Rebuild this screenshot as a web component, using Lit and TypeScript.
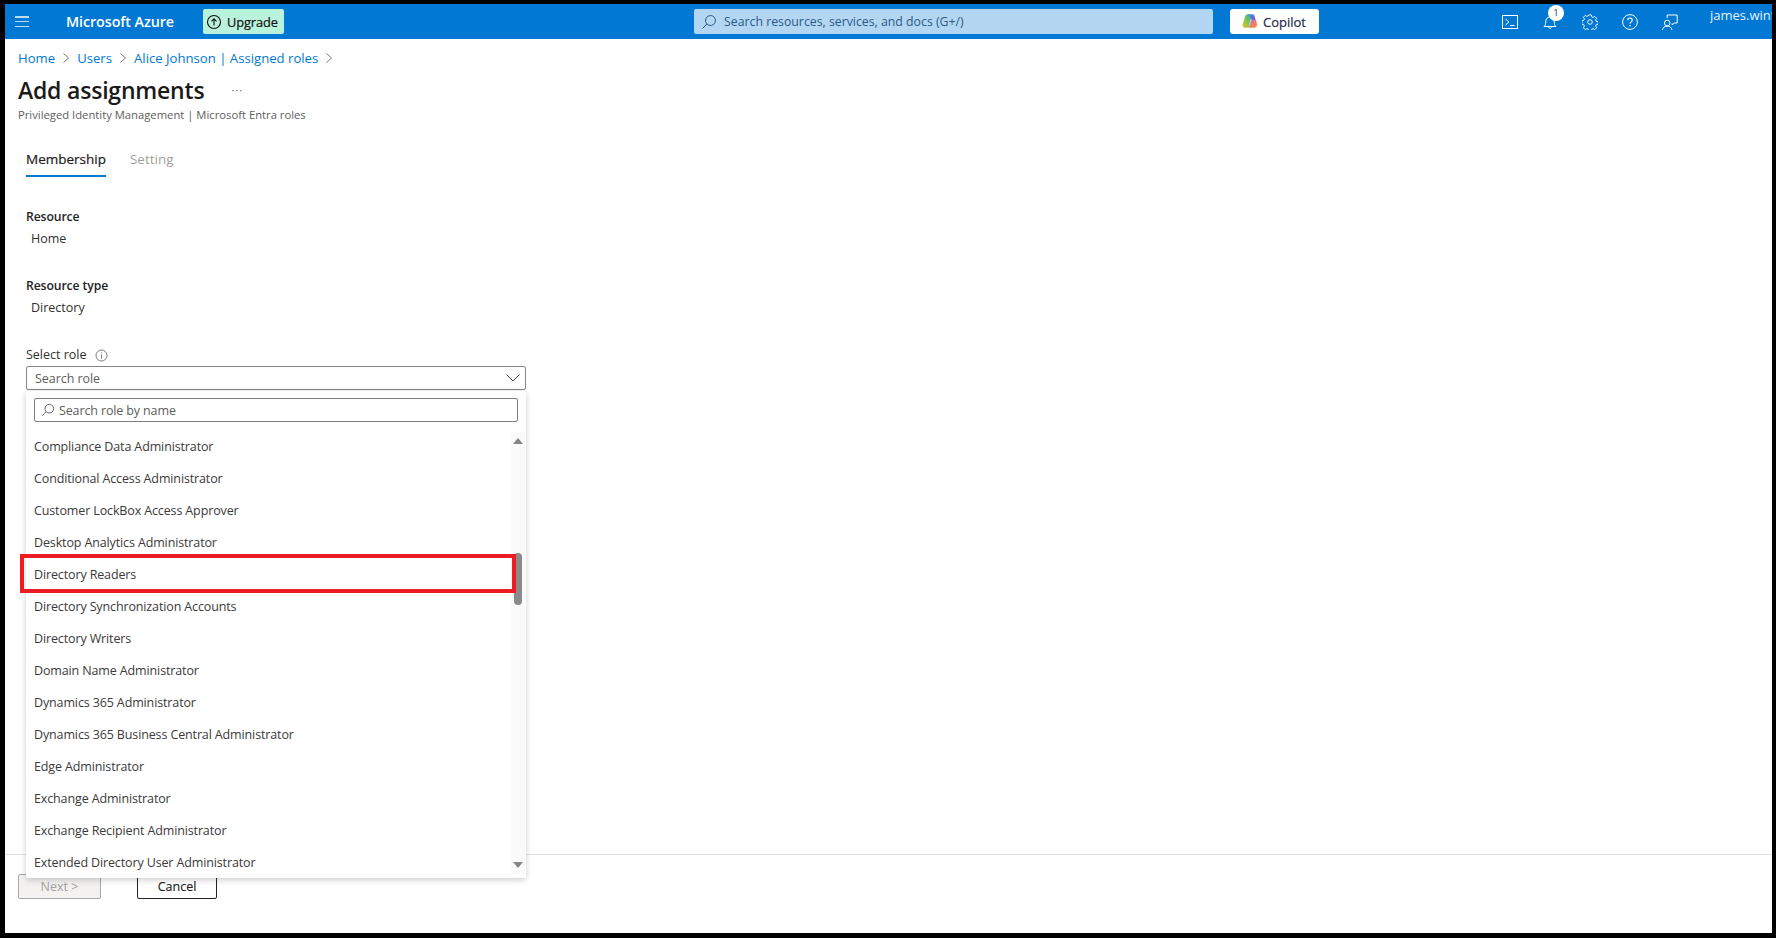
import { LitElement, html, css, svg } from "lit";
import { customElement } from "lit/decorators.js";

const ROLES = [
  "Compliance Data Administrator",
  "Conditional Access Administrator",
  "Customer LockBox Access Approver",
  "Desktop Analytics Administrator",
  "Directory Readers",
  "Directory Synchronization Accounts",
  "Directory Writers",
  "Domain Name Administrator",
  "Dynamics 365 Administrator",
  "Dynamics 365 Business Central Administrator",
  "Edge Administrator",
  "Exchange Administrator",
  "Exchange Recipient Administrator",
  "Extended Directory User Administrator",
];

const searchIcon = svg`<path d="M9.5 1.5a5 5 0 1 1-3.6 8.5A5 5 0 0 1 9.5 1.5Zm-3.6 8.5L1.5 14.5" fill="none" stroke="currentColor" stroke-width="1"/>`;

@customElement("app-root")
export class AppRoot extends LitElement {
  static styles = css`
    :host {
      display: block;
      width: 1776px;
      height: 938px;
      font-family: "Open Sans", "Noto Sans", sans-serif;
      color: #323130;
      font-size: 13px;
    }
    * { box-sizing: border-box; }
    .frame {
      width: 100%;
      height: 100%;
      border-style: solid;
      border-color: #000;
      border-width: 4px 4px 5px 5px;
      background: #fff;
      display: flex;
      flex-direction: column;
      position: relative;
      overflow: hidden;
    }
    header {
      height: 35px;
      flex: none;
      background: #0078d4;
      display: flex;
      align-items: center;
      color: #fff;
      position: relative;
    }
    .burger { margin-left: 10px; width: 14px; height: 11px; display: flex; flex-direction: column; justify-content: space-between; }
    .burger i { display: block; height: 1.5px; background: #bcdcf4; }
    .brand { margin-left: 37px; width: 112px; font-size: 14.3px; font-weight: 600; white-space: nowrap; letter-spacing: -0.08px; }
    .upgrade {
      margin-left: 25px; width: 81px; height: 25px; border-radius: 2px;
      background: #b9f3dc; color: #111; display: flex; align-items: center; gap: 5px; padding-left: 3px;
      font-size: 12.8px; letter-spacing: -0.08px; -webkit-text-stroke: .2px #111;
    }
    .search {
      margin-left: 410px; width: 519px; height: 25px; border-radius: 2px; background: #b3d7f2;
      color: #2c5a85; display: flex; align-items: center; gap: 7px; padding-left: 7px; font-size: 12.3px; white-space: nowrap;
    }
    .copilot {
      margin-left: 17px; width: 89px; height: 25px; border-radius: 3px; background: #fff; color: #1f2d4d;
      display: flex; align-items: center; gap: 5px; padding-left: 11px; font-size: 13px; -webkit-text-stroke: .2px #1f2d4d;
    }
    .hicons { margin-left: 183px; display: flex; align-items: center; gap: 24px; }
    .hicon { position: relative; width: 16px; height: 16px; display: block; }
    .hicon svg { display: block; }
    .badge {
      position: absolute; left: 6px; top: -9px; width: 16px; height: 16px; border-radius: 50%;
      background: #fff; color: #0f3f68; font-size: 9.5px; line-height: 16px; text-align: center;
    }
    .user {
      position: absolute; left: 1705px; top: 2px; font-size: 13px; white-space: nowrap;
      color: #e6f2fb; width: 63px; overflow: hidden;
    }

    main { flex: 1; min-height: 0; display: flex; flex-direction: column; padding: 0 0 0 13px; }
    .crumbs { margin-top: 10px; height: 18px; display: flex; align-items: center; gap: 7px; color: #0078d4; font-size: 13.15px; white-space: nowrap; }
    .crumbs svg { color: #7a7a7a; }
    .title-row { margin-top: 9px; display: flex; align-items: center; height: 28px; }
    h1 { margin: 0; font-size: 23px; font-weight: 600; color: #1b1a19; letter-spacing: -0.2px; white-space: nowrap; }
    .more { margin-left: 27px; color: #666; font-size: 11px; line-height: 1; position: relative; top: -1px; letter-spacing: 1px; }
    .sub { margin-top: 3px; font-size: 11.25px; color: #605e5c; white-space: nowrap; height: 16px; line-height: 16px; }
    .tabs { margin-top: 26px; margin-left: 8px; display: flex; gap: 24px; height: 28px; }
    .tab { font-size: 13.5px; height: 28px; line-height: 20px; }
    .tab.on { color: #1b1a19; -webkit-text-stroke: .2px #1b1a19; border-bottom: 2px solid #0078d4; }
    .tab.off { color: #a19f9d; }

    .form { margin-top: 31px; margin-left: 8px; }
    .label { font-size: 12.2px; font-weight: 600; color: #252423; height: 18px; line-height: 18px; letter-spacing: -0.1px; }
    .value { font-size: 12.5px; margin: 4px 0 0 5px; color: #323130; height: 18px; line-height: 18px; }
    .field + .field { margin-top: 29px; }
    .select-label { display: flex; align-items: center; gap: 8px; font-size: 12.5px; height: 18px; line-height: 18px; color: #323130; }
    .combo {
      margin-top: 2px; width: 500px; height: 24px; border: 1px solid #8a8886; border-radius: 2px;
      display: flex; align-items: center; justify-content: space-between; padding: 0 4px 0 8px; color: #605e5c; font-size: 12.5px; letter-spacing: -0.05px;
    }

    .spacer { flex: 1; }
    footer {
      flex: none; height: 79px; border-top: 1px solid #e1e1e1; margin-left: -13px;
      display: flex; align-items: flex-start; gap: 36px; padding: 19px 0 0 13px;
    }
    .btn { height: 25px; border-radius: 2px; display: flex; align-items: center; justify-content: center; font-size: 12.5px; }
    .next { width: 83px; background: #f3f2f1; border: 1px solid #a8a8a8; color: #a19f9d; letter-spacing: .05px; }
    .cancel { width: 80px; background: #fff; border: 1px solid #252423; color: #201f1e; -webkit-text-stroke: .15px #201f1e; }

    .drop {
      position: absolute; left: 21px; top: 387px; width: 500px; height: 487px; background: #fff;
      border-radius: 2px; box-shadow: 0 1.5px 6px rgba(0,0,0,.2); z-index: 3;
    }
    .drop-search {
      margin: 7px 8px 0; height: 24px; border: 1px solid #7f7f7f; border-radius: 2px;
      display: flex; align-items: center; gap: 4px; padding-left: 6px; color: #605e5c; font-size: 12.5px; letter-spacing: -0.13px;
    }
    .list { margin-top: 9px; padding-left: 8px; }
    .item { height: 32px; line-height: 32px; font-size: 12.5px; color: #3b3a39; white-space: nowrap; letter-spacing: -0.13px; }
    .track { position: absolute; right: 1px; top: 41px; bottom: 4px; width: 14px; background: #fafafa; }
    .arrow-up, .arrow-down { position: absolute; left: 2px; width: 0; height: 0; border-left: 5px solid transparent; border-right: 5px solid transparent; }
    .arrow-up { top: 6px; border-bottom: 6px solid #858585; }
    .arrow-down { bottom: 6px; border-top: 6px solid #858585; }
    .thumb { position: absolute; left: 3px; top: 121px; width: 8px; height: 52px; border-radius: 4px; background: #8a8a8a; }
    .mark {
      position: absolute; left: -6px; top: 163px; width: 496px; height: 39px; border: 4px solid #ed1c24; pointer-events: none;
    }
  `;

  chev() {
    return html`<svg width="8" height="12" viewBox="0 0 8 12"><path d="M1.5 1.5 6.5 6l-5 4.5" fill="none" stroke="currentColor" stroke-width="1"/></svg>`;
  }

  render() {
    return html`
      <div class="frame">
        <header>
          <div class="burger"><i></i><i></i><i></i></div>
          <div class="brand">Microsoft Azure</div>
          <div class="upgrade">
            <svg width="16" height="16" viewBox="0 0 16 16"><circle cx="8" cy="8" r="6.5" fill="none" stroke="#111" stroke-width="1.1"/><path d="M8 11.5V5M5.5 7.3 8 4.8l2.5 2.5" fill="none" stroke="#111" stroke-width="1.1"/></svg>
            <span>Upgrade</span>
          </div>
          <div class="search">
            <svg width="16" height="16" viewBox="0 0 16 16">${searchIcon}</svg>
            <span>Search resources, services, and docs (G+/)</span>
          </div>
          <div class="copilot">
            <svg width="17" height="17" viewBox="0 0 16 16">
              <defs>
                <linearGradient id="c1" x1="0" y1="0" x2="1" y2="1"><stop offset="0" stop-color="#1f9be8"/><stop offset=".55" stop-color="#7a5be6"/><stop offset="1" stop-color="#c85ad0"/></linearGradient>
                <linearGradient id="c2" x1="0" y1="1" x2="1" y2="0"><stop offset="0" stop-color="#f4c52e"/><stop offset=".55" stop-color="#6fc75a"/><stop offset="1" stop-color="#1fa6c8"/></linearGradient>
                <linearGradient id="c3" x1="0" y1="0" x2="1" y2="1"><stop offset="0" stop-color="#e85cb4"/><stop offset="1" stop-color="#f5933a"/></linearGradient>
              </defs>
              <path d="M6.5 1.2h4c1.2 0 1.9.7 2.3 1.8l1.6 5.6c.3 1.3-.5 2.4-1.8 2.4H8.2L6 3.2Z" fill="url(#c1)"/>
              <path d="M6.5 1.2C5 1.2 4.2 2 3.8 3.2L1.5 10.3c-.6 2 .5 3.6 2.4 3.6h2.7c1 0 1.6-.5 1.9-1.5L10.2 6 8.6 2.8C8.2 1.8 7.5 1.2 6.5 1.2Z" fill="url(#c2)"/>
              <path d="M9.6 6.6h3c1 0 1.5.5 1.8 1.4l.6 2.4c.5 1.9-.7 3.5-2.5 3.5H6.6c1 0 1.6-.5 1.9-1.5Z" fill="url(#c3)"/>
              <path d="M9.4 6.2 8 11" fill="none" stroke="#fff" stroke-opacity=".55" stroke-width="1" stroke-linecap="round"/>
            </svg>
            <span>Copilot</span>
          </div>
          <div class="hicons">
            <span class="hicon"><svg width="16" height="16" viewBox="0 0 16 16"><rect x=".5" y="1.5" width="15" height="13" fill="none" stroke="#fff"/><path d="M3.5 5 7 8l-3.5 3M8 11.5h4.5" fill="none" stroke="#fff"/></svg></span>
            <span class="hicon"><svg width="16" height="16" viewBox="0 0 16 16"><path d="M2 12.5c1.2-1 1.7-2.5 1.7-4.5 0-3 1.6-5 4.3-5s4.3 2 4.3 5c0 2 .5 3.5 1.7 4.5ZM6.3 12.5c0 2.2 3.4 2.2 3.4 0" fill="none" stroke="#fff"/></svg><span class="badge">1</span></span>
            <span class="hicon"><svg width="16" height="16" viewBox="0 0 16 16"><circle cx="8" cy="8" r="2.3" fill="none" stroke="#eaf4fb"/><path d="M6.7 .9h2.6l.4 1.9 1.4.6 1.7-1 1.8 1.8-1 1.7.6 1.4 1.9.4v2.6l-1.9.4-.6 1.4 1 1.7-1.8 1.8-1.7-1-1.4.6-.4 1.9H6.7l-.4-1.9-1.4-.6-1.7 1-1.8-1.8 1-1.7-.6-1.4-1.9-.4V6.7l1.9-.4.6-1.4-1-1.7 1.8-1.8 1.7 1 1.4-.6Z" fill="none" stroke="#eaf4fb" stroke-width="1" stroke-linejoin="round"/></svg></span>
            <span class="hicon"><svg width="16" height="16" viewBox="0 0 16 16"><circle cx="8" cy="8" r="7.4" fill="none" stroke="#fff"/><path d="M5.7 6.2C5.7 4.8 6.8 4 8 4s2.3.8 2.3 2.1c0 1.8-2.3 1.8-2.3 3.6" fill="none" stroke="#fff" stroke-width="1.1"/><circle cx="8" cy="11.8" r=".8" fill="#fff"/></svg></span>
            <span class="hicon"><svg width="16" height="16" viewBox="0 0 16 16"><circle cx="5.2" cy="9" r="2.8" fill="none" stroke="#fff"/><path d="M.5 16c.3-2.4 2-3.8 4.7-3.8S9.6 13.6 10 16M5.2 4V1h10v8h-3l-2 2V9.5" fill="none" stroke="#fff"/></svg></span>
          </div>
          <div class="user">james.wint</div>
        </header>
        <main>
          <nav class="crumbs">
            <span>Home</span>${this.chev()}<span>Users</span>${this.chev()}<span>Alice Johnson | Assigned roles</span>${this.chev()}
          </nav>
          <div class="title-row"><h1>Add assignments</h1><span class="more">···</span></div>
          <div class="sub">Privileged Identity Management | Microsoft Entra roles</div>
          <div class="tabs"><div class="tab on">Membership</div><div class="tab off">Setting</div></div>
          <div class="form">
            <div class="field"><div class="label">Resource</div><div class="value">Home</div></div>
            <div class="field"><div class="label">Resource type</div><div class="value">Directory</div></div>
            <div class="field">
              <div class="select-label">Select role
                <svg width="13" height="13" viewBox="0 0 13 13"><circle cx="6.5" cy="6.5" r="5.5" fill="none" stroke="#7a7a7a"/><path d="M6.5 5.5v4M6.5 3.4v1" stroke="#7a7a7a"/></svg>
              </div>
              <div class="combo">
                <span>Search role</span>
                <svg width="16" height="16" viewBox="0 0 16 16"><path d="M1.5 4.5 8 11l6.5-6.5" fill="none" stroke="#444" stroke-width="1"/></svg>
              </div>
            </div>
          </div>
          <div class="spacer"></div>
          <footer>
            <div class="btn next">Next &gt;</div>
            <div class="btn cancel">Cancel</div>
          </footer>
        </main>
        <div class="drop">
          <div class="drop-search">
            <svg width="14" height="14" viewBox="0 0 16 16" style="color:#555">${searchIcon}</svg>
            <span>Search role by name</span>
          </div>
          <div class="list">${ROLES.map((r) => html`<div class="item">${r}</div>`)}</div>
          <div class="track"><div class="arrow-up"></div><div class="thumb"></div><div class="arrow-down"></div></div>
          <div class="mark"></div>
        </div>
      </div>
    `;
  }
}
